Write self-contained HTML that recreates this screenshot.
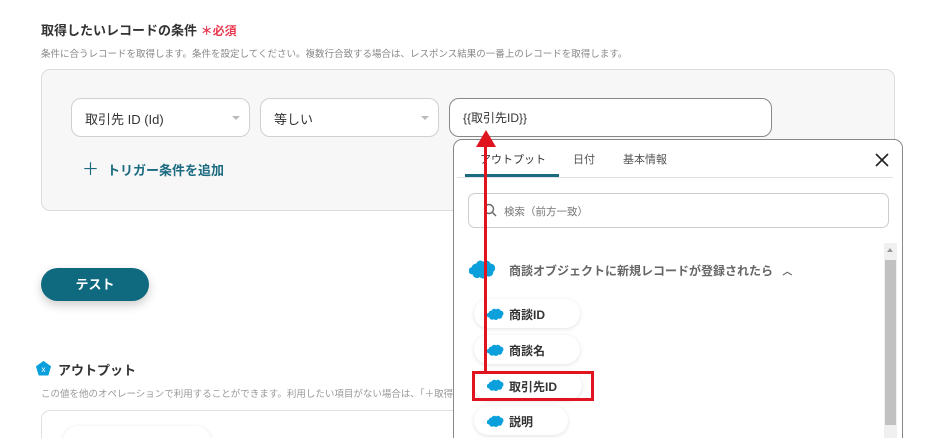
<!DOCTYPE html>
<html><head><meta charset="utf-8"><style>
*{box-sizing:border-box;margin:0;padding:0}
html,body{width:937px;height:438px;overflow:hidden}
body{background:#fff;font-family:"Liberation Sans","Noto Sans CJK JP",sans-serif;color:#333;position:relative}
.a{position:absolute}
.sel{position:absolute;top:98px;height:39px;border:1px solid #d0d0d0;border-radius:10px;background:#fff;font-size:13px;padding:10px 0 0 13px;color:#333}
.sel .c{position:absolute;right:9px;top:17px;border-left:4px solid transparent;border-right:4px solid transparent;border-top:4px solid #bbb}
.pill{position:absolute;left:474px;width:106px;height:29px;border-radius:15px;background:#fff;box-shadow:0 1px 4px rgba(0,0,0,.12);font-size:12px;font-weight:bold;padding:7px 0 0 35px;color:#333}
.cl{position:absolute}
</style></head><body>
<svg width="0" height="0" style="position:absolute"><defs><symbol id="cld" viewBox="0 0 30 20"><path d="M8 4a5 5 0 0 1 8-2a5 5 0 0 1 8 2a5 5 0 0 1 3 9a5 5 0 0 1-7 5a5 5 0 0 1-8 1a5 5 0 0 1-8-3a4 4 0 0 1-1-8a5 5 0 0 1 5-4z" fill="#0ba0dc"/></symbol></defs></svg>
<div class="a" style="left:41px;top:20px;font-size:13px;font-weight:bold;color:#333">取得したいレコードの条件 <span style="color:#e8384f;font-size:12px">＊必須</span></div>
<div class="a" style="left:41px;top:46px;font-size:9.5px;color:#888">条件に合うレコードを取得します。条件を設定してください。複数行合致する場合は、レスポンス結果の一番上のレコードを取得します。</div>
<div class="a" style="left:41px;top:69px;width:854px;height:142px;background:#f7f7f7;border:1px solid #dcdcdc;border-radius:9px"></div>
<div class="sel" style="left:71px;width:179px">取引先 ID (Id)<span class="c"></span></div>
<div class="sel" style="left:260px;width:179px">等しい<span class="c"></span></div>
<div class="sel" style="left:449px;width:323px;border-color:#888;font-size:12px;padding-left:13px">{{取引先ID}}</div>
<div class="a" style="left:82px;top:155px;font-size:13px;font-weight:bold;color:#1a6a80"><span style="font-size:17px;font-weight:normal;margin-right:8px">＋</span>トリガー条件を追加</div>
<div class="a" style="left:41px;top:268px;width:108px;height:33px;border-radius:17px;background:#0f6a80;color:#fff;font-size:13px;font-weight:bold;text-align:center;line-height:33px;box-shadow:0 4px 10px rgba(0,0,0,.2)">テスト</div>
<svg class="a" style="left:36px;top:361px" width="15" height="15" viewBox="0 0 15 15"><path d="M7.5 0.5L14.5 5.5L12 14H3L0.5 5.5Z" fill="#0ba0dc" stroke="#0ba0dc" stroke-linejoin="round"/><text x="7.5" y="11" font-size="8" fill="#fff" text-anchor="middle" font-family="Liberation Sans">x</text></svg>
<div class="a" style="left:58px;top:360px;font-size:13px;font-weight:bold">アウトプット</div>
<div class="a" style="left:41px;top:386px;font-size:9.5px;color:#999;white-space:nowrap">この値を他のオペレーションで利用することができます。利用したい項目がない場合は、「＋取得する値を追加」</div>
<div class="a" style="left:41px;top:410px;width:500px;height:40px;border:1px solid #e0e0e0;border-radius:9px"></div>
<div class="a" style="left:63px;top:426px;width:148px;height:30px;border-radius:15px;box-shadow:0 1px 5px rgba(0,0,0,.12);background:#fff"></div>
<div class="a" style="left:453px;top:139px;width:450px;height:310px;background:#fff;border:1px solid #888;border-radius:9px"></div>
<div class="a" style="left:480px;top:151px;font-size:11px;color:#333">アウトプット</div>
<div class="a" style="left:573px;top:151px;font-size:11px;color:#555">日付</div>
<div class="a" style="left:623px;top:151px;font-size:11px;color:#555">基本情報</div>
<div class="a" style="left:457px;top:177px;width:436px;height:1px;background:#e0e0e0"></div>
<div class="a" style="left:465px;top:174px;width:94px;height:3px;background:#1a6a80"></div>
<svg class="a" style="left:875px;top:153px" width="14" height="14"><path d="M1 1L13 13M13 1L1 13" stroke="#222" stroke-width="1.6"/></svg>
<div class="a" style="left:468px;top:193px;width:421px;height:35px;border:1px solid #ccc;border-radius:7px"></div>
<svg class="a" style="left:483px;top:203px" width="14" height="14"><circle cx="6" cy="6" r="4.5" fill="none" stroke="#666" stroke-width="1.4"/><path d="M9.5 9.5L13 13" stroke="#666" stroke-width="1.4"/></svg>
<div class="a" style="left:504px;top:204px;font-size:10.5px;color:#777">検索（前方一致）</div>
<div class="a" style="left:884px;top:243px;width:13px;height:195px;background:#f0f0f0"></div>
<div class="a" style="left:885px;top:260px;width:11px;height:165px;background:#c1c1c1"></div>
<div class="a" style="left:887px;top:248px;border-left:3px solid transparent;border-right:3px solid transparent;border-bottom:4px solid #999"></div>
<svg class="cl" style="left:469px;top:259px" width="27" height="20"><use href="#cld"/></svg>
<div class="a" style="left:509px;top:262px;font-size:12px;font-weight:bold;color:#666">商談オブジェクトに新規レコードが登録されたら <span style="font-size:10px;margin-left:6px">︿</span></div>
<div class="pill" style="top:299px">商談ID</div><svg class="cl" style="left:487px;top:308px" width="17" height="12"><use href="#cld"/></svg>
<div class="pill" style="top:335px">商談名</div><svg class="cl" style="left:487px;top:344px" width="17" height="12"><use href="#cld"/></svg>
<div class="pill" style="top:371px;width:108px">取引先ID</div><svg class="cl" style="left:487px;top:379px" width="17" height="12"><use href="#cld"/></svg>
<div class="a" style="left:472px;top:371px;width:122px;height:30px;border:3px solid #e0141e"></div>
<div class="pill" style="top:406px;width:94px">説明</div><svg class="cl" style="left:487px;top:415px" width="17" height="12"><use href="#cld"/></svg>
<div class="a" style="left:484px;top:145px;width:3px;height:228px;background:#e0141e"></div>
<svg class="a" style="left:475px;top:130px" width="22" height="18"><path d="M11 0L21 17H1Z" fill="#e0141e"/></svg>
</body></html>
